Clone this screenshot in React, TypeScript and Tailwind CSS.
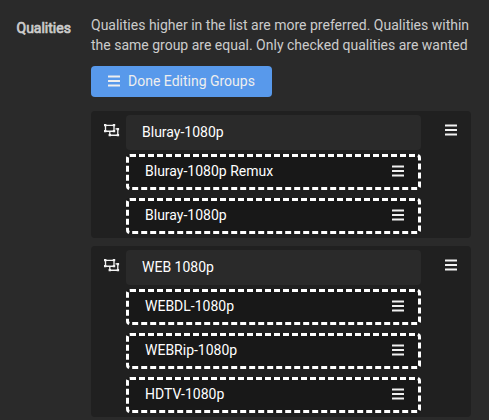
const groups = [
  { name: 'Bluray-1080p', items: ['Bluray-1080p Remux', 'Bluray-1080p'] },
  { name: 'WEB 1080p', items: ['WEBDL-1080p', 'WEBRip-1080p', 'HDTV-1080p'] },
];

function Bars() {
  return (
    <svg className="h-[14px] w-3 shrink-0" viewBox="0 0 12 14" fill="currentColor">
      <rect x="0" y="1.4" width="12" height="2.1" rx="0.3" />
      <rect x="0" y="6" width="12" height="2" rx="0.3" />
      <rect x="0" y="10.5" width="12" height="2.1" rx="0.3" />
    </svg>
  );
}

function Ungroup() {
  return (
    <svg className="h-[14px] w-4 shrink-0" viewBox="0 0 16 14">
      <path
        d="M1.5 2.3H10V8.2H1.5ZM11.5 5.9H13.8V12.2H5.8V9"
        fill="none"
        stroke="currentColor"
        strokeWidth="1.35"
      />
      <path
        d="M0 1h2.4v2.3H0zM8.8 1h2.4v2.3H8.8zM0 7h2.4v2.3H0zM8.8 7h2.4v2.3H8.8zM4.6 11h2.4v2.3H4.6zM12.7 11h2.4v2.3h-2.4zM12.7 4.9h2.4v2.3h-2.4z"
        fill="currentColor"
      />
    </svg>
  );
}

function QualityGroup({ name, items }: { name: string; items: string[] }) {
  return (
    <div className="flex w-[380px] rounded bg-[#202020] py-1">
      <div className="flex w-[35px] pt-2 pl-[13px] text-[#f2f2f2]">
        <Ungroup />
      </div>
      <div className="w-[295px]">
        <div className="flex h-[35px] items-center rounded bg-[#2a2a2a] pb-px pl-4">{name}</div>
        <div className="mt-1 flex flex-col gap-2">
          {items.map((item) => (
            <div
              key={item}
              className="flex h-9 items-center justify-between rounded border-[3px] border-dashed border-white bg-[#181818] pr-[14px] pb-[2px] pl-4 text-white"
            >
              <span>{item}</span>
              <span className="text-[#f0f0f0]">
                <Bars />
              </span>
            </div>
          ))}
        </div>
      </div>
      <div className="pt-2 pl-6 text-[#f2f2f2]">
        <Bars />
      </div>
    </div>
  );
}

export default function App() {
  return (
    <div className="flex h-[420px] w-[489px] overflow-hidden bg-[#2a2a2a] font-['Roboto',sans-serif] text-[14px] leading-5 text-white">
      <div className="w-[91px] shrink-0 pt-[18px] pl-[16.5px] text-[#ccc] [-webkit-text-stroke:0.7px_#ccc]">
        Qualities
      </div>
      <div className="w-[380px] shrink-0 pt-[15px]">
        <p className="whitespace-nowrap text-[#ccc]">
          Qualities higher in the list are more preferred. Qualities within
          <br />
          the same group are equal. Only checked qualities are wanted
        </p>
        <button className="mt-[11px] flex h-[31px] w-[181px] items-center gap-2 rounded bg-[#5899eb] pb-px pl-[17px] text-[#eee]">
          <Bars />
          Done Editing Groups
        </button>
        <div className="mt-[14px] flex flex-col gap-2">
          {groups.map((group) => (
            <QualityGroup key={group.name} name={group.name} items={group.items} />
          ))}
        </div>
      </div>
    </div>
  );
}
